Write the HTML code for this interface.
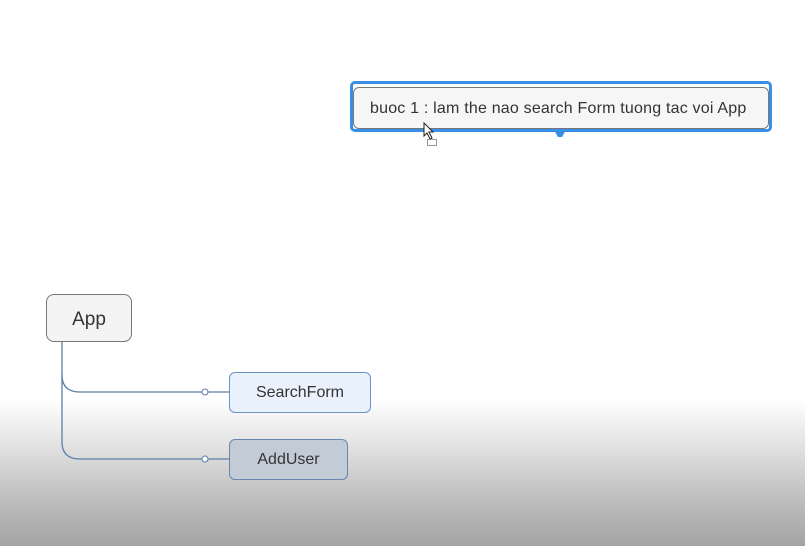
<!DOCTYPE html>
<html><head><style>
html,body{margin:0;padding:0;width:805px;height:546px;overflow:hidden;font-family:"Liberation Sans","DejaVu Sans",sans-serif;}
body{position:relative;background:linear-gradient(to bottom,#fff 0,#fff 400px,#e6e6e6 440px,#c4c4c4 490px,#a3a3a3 546px);}
.box{position:absolute;box-sizing:border-box;display:flex;align-items:center;justify-content:center;color:#333;}
</style></head><body>
<div style="position:absolute;left:350px;top:81px;width:422px;height:51px;border:3px solid #3a8ee6;border-radius:5px;box-sizing:border-box;"></div>
<div style="position:absolute;left:553px;top:128px;width:14px;height:10px;background:#3a8ee6;clip-path:polygon(0 0,100% 0,65% 90%,35% 90%);"></div>
<div class="box" style="left:353px;top:87px;width:416px;height:42px;border:1px solid #777;border-radius:6px;background:#f6f6f6;font-size:16px;letter-spacing:0.2px;justify-content:flex-start;padding-left:16px;padding-top:2px;">buoc 1 : lam the nao search Form tuong tac voi App</div>
<svg style="position:absolute;left:423px;top:122px" width="16" height="26"><path d="M1 1 L1 14 L4 11 L7 17 L9 16 L6 10 L10 10 Z" fill="#fff" stroke="#222" stroke-width="1"/><rect x="4.5" y="17.5" width="9" height="6" fill="#fff" stroke="#333" stroke-dasharray="1,1"/></svg>
<svg style="position:absolute;left:0;top:0" width="805" height="546">
<path d="M62 341 V375 Q62 392 80 392 H229" fill="none" stroke="#5b7fa8" stroke-width="1.3"/>
<path d="M62 375 V442 Q62 459 80 459 H229" fill="none" stroke="#5b7fa8" stroke-width="1.3"/>
<circle cx="205" cy="392" r="3" fill="#fff" stroke="#5b7fa8"/>
<circle cx="205" cy="459" r="3" fill="#fff" stroke="#5b7fa8"/>
</svg>
<div class="box" style="left:46px;top:294px;width:86px;height:48px;border:1px solid #777;border-radius:8px;background:#f4f4f4;font-size:19px;padding-top:3px;">App</div>
<div class="box" style="left:229px;top:372px;width:142px;height:41px;border:1px solid #6a92c4;border-radius:6px;background:#e9f1fc;font-size:16px;">SearchForm</div>
<div class="box" style="left:229px;top:439px;width:119px;height:41px;border:1px solid #6a86ac;border-radius:6px;background:#c3cbd6;font-size:16px;">AddUser</div>
</body></html>
